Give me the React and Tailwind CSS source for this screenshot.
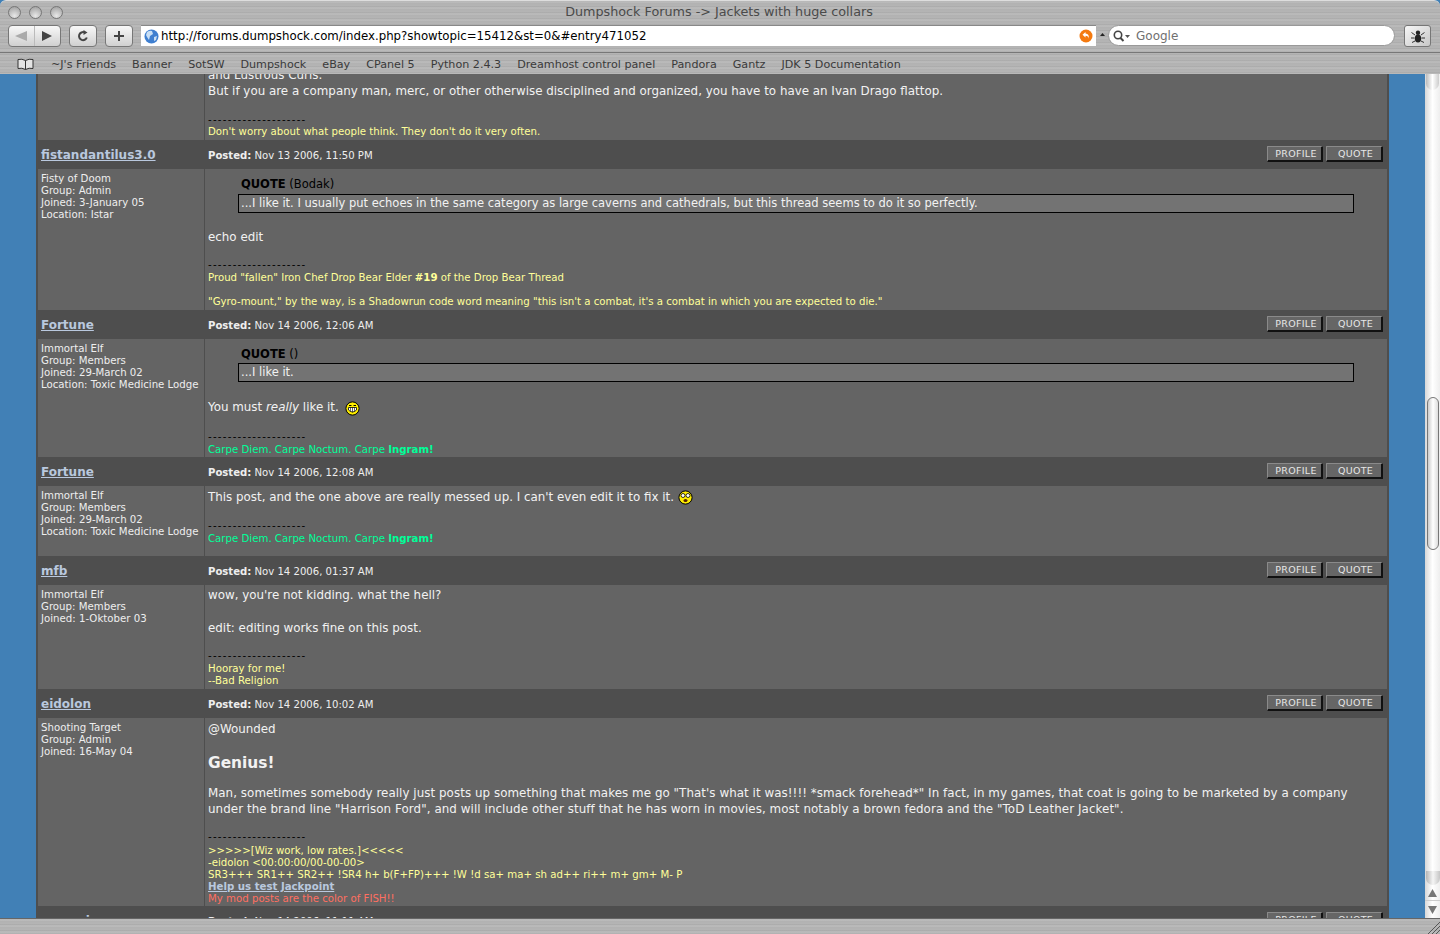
import React from "react";

const dash = "--------------------";

function Btn({ children, w }) {
  return (
    <div className={`${w} h-[16px] pl-[3px] tracking-[0.3px] flex items-center justify-center bg-[#666666] border border-[#8a8a8a] border-r-[#111111] border-b-[#111111] border-r-2 border-b-2 rounded-[1px] text-[9.5px] leading-none text-[#e6e6e6]`}>
      {children}
    </div>
  );
}

function Header({ name, date }) {
  return (
    <div className="h-[29px] flex items-center bg-[#4e4e4e]">
      <div className="w-[167px] pl-[3px] font-bold text-[12px] underline text-[#b9c8de] shrink-0">{name}</div>
      <div className="pl-[3px] pt-[3px] text-[10.1px] text-[#eeeeee] flex-1"><b>Posted:</b> {date}</div>
      <div className="flex gap-[3px] pr-[4px] -mt-[1px]">
        <Btn w="w-[56px]">PROFILE</Btn>
        <Btn w="w-[57px]">QUOTE</Btn>
      </div>
    </div>
  );
}

function Body({ info, h, children, pt }) {
  return (
    <div className={`flex ${h} bg-[#646464]`}>
      <div className="w-[167px] shrink-0 border-r border-[#4e4e4e] pl-[3px] pt-[4px] text-[10.2px] leading-[12px] text-[#eeeeee] whitespace-nowrap">
        {info.map((l) => <div key={l}>{l}</div>)}
      </div>
      <div className={`flex-1 pl-[3px] ${pt} text-[#f2f2f2]`}>{children}</div>
    </div>
  );
}

const T = ({ c = "", children }) => <div className={`text-[11.88px] leading-[16px] whitespace-nowrap ${c}`}>{children}</div>;
const S = ({ c = "", children }) => <div className={`text-[10.2px] leading-[12px] whitespace-nowrap ${c}`}>{children}</div>;

function Quote({ who, text, boxH }) {
  return (
    <div className="pl-[31px] pr-[33px]">
      <div className="pl-[2px] pt-[1px] text-[11.5px] leading-[16px] text-black"><b>QUOTE</b> ({who})</div>
      <div className={`-ml-[1px] ${boxH} flex items-center border border-black bg-[#737373] pl-[2px] pt-[1px] text-[11.5px] text-[#f2f2f2]`}>{text}</div>
    </div>
  );
}

function Grin() {
  return (
    <svg width="15" height="15" viewBox="0 0 15 15" className="inline-block align-[-5px] ml-[3px]">
      <circle cx="7.5" cy="7.5" r="6.6" fill="#ffee00" stroke="#000" />
      <path d="M3.5 6.5h8v2.5q-4 4-8 0z" fill="#fff" stroke="#000" strokeWidth="0.8" />
      <path d="M5.5 6.5v4M7.5 6.5v5M9.5 6.5v4" stroke="#000" strokeWidth="0.6" />
      <path d="M4 4.5h2.5M8.5 4.5h2.5" stroke="#000" />
    </svg>
  );
}

function Shock() {
  return (
    <svg width="15" height="15" viewBox="0 0 15 15" className="inline-block align-[-4px]">
      <circle cx="7.5" cy="7.5" r="6.6" fill="#ffee00" stroke="#000" />
      <circle cx="5" cy="5.5" r="2" fill="#fff" stroke="#000" strokeWidth="0.8" />
      <circle cx="10" cy="5.5" r="2" fill="#fff" stroke="#000" strokeWidth="0.8" />
      <ellipse cx="7.5" cy="10.5" rx="2" ry="1.5" fill="#552200" />
    </svg>
  );
}

const metal = "bg-[repeating-linear-gradient(180deg,#b4b4b4_0px,#bdbdbd_1px,#aeaeae_3px,#b8b8b8_4px,#a9a9a9_6px)]";

function Bug() {
  return (
    <svg width="16" height="14" viewBox="0 0 16 14">
      <ellipse cx="8" cy="9.5" rx="3.2" ry="4" fill="#222" />
      <circle cx="8" cy="3.8" r="2.2" fill="#222" />
      <path d="M5 6 1.5 3.5M11 6l3.5-2.5M4.5 9H1M11.5 9H15M5 12l-3 1.5M11 12l3 1.5" stroke="#333" strokeWidth="1" fill="none" />
    </svg>
  );
}

const bookmarks = ["~J's Friends", "Banner", "SotSW", "Dumpshock", "eBay", "CPanel 5", "Python 2.4.3", "Dreamhost control panel", "Pandora", "Gantz", "JDK 5 Documentation"];

function Chrome() {
  return (
    <div className={`h-[74px] shrink-0 ${metal} flex flex-col rounded-t-[6px] border-t border-[#dddddd] font-['DejaVu_Sans',sans-serif] relative z-10`}>
      <div className="h-[23px] shrink-0 flex items-center relative">
        <div className="flex gap-[8px] pl-[8px]">
          {[0, 1, 2].map((i) => (
            <div key={i} className="w-[13px] h-[13px] rounded-full border border-[#777777] bg-[radial-gradient(circle_at_50%_80%,#e8e8e8,#9a9a9a)]" />
          ))}
        </div>
        <div className="absolute inset-0 pb-[2px] pr-[2px] flex items-center justify-center text-[12.75px] text-[#4a4a4a]">Dumpshock Forums -&gt; Jackets with huge collars</div>
      </div>
      <div className="h-[29px] shrink-0 flex items-start pt-[1px] border-b border-[#777777]">
        <div className="ml-[8px] w-[53px] h-[22px] flex bg-gradient-to-b from-[#f8f8f8] to-[#d0d0d0] border border-[#777777] rounded-[4px]">
          <div className="w-1/2 flex items-center justify-center border-r border-[#bbbbbb]">
            <svg width="12" height="10" viewBox="0 0 12 10"><path d="M0 5 12 0v10z" fill="#aaaaaa" /></svg>
          </div>
          <div className="w-1/2 flex items-center justify-center">
            <svg width="10" height="10" viewBox="0 0 10 10"><path d="M10 5 0 0v10z" fill="#444444" /></svg>
          </div>
        </div>
        <div className="ml-[8px] w-[28px] h-[22px] flex items-center justify-center bg-gradient-to-b from-[#f8f8f8] to-[#d0d0d0] border border-[#777777] rounded-[4px]">
          <svg width="12" height="12" viewBox="0 0 12 12"><path d="M9.8 7.5A4 4 0 1 1 7.5 2.4" stroke="#444" strokeWidth="2" fill="none" /><path d="M6.5 0 10.5 2.6 6.5 5z" fill="#444" /></svg>
        </div>
        <div className="ml-[8px] w-[28px] h-[22px] flex items-center justify-center bg-gradient-to-b from-[#f8f8f8] to-[#d0d0d0] border border-[#777777] rounded-[4px]">
          <svg width="12" height="12" viewBox="0 0 12 12"><path d="M6 1v10M1 6h10" stroke="#444" strokeWidth="2" /></svg>
        </div>
        <div className="ml-[8px] w-[955px] h-[21px] flex items-center bg-white border-t border-[#888888] pl-[3px] pr-[3px] text-[11.77px] text-black">
          <svg width="15" height="15" viewBox="0 0 15 15" className="shrink-0 mr-[2px]">
            <circle cx="7.5" cy="7.5" r="7" fill="#3f7fd0" />
            <path d="M3 3q3-2 5-1l1 3-3 2-1 4-2-3-1-2zM10 8l3-1-1 4-2 1z" fill="#c9dff5" />
          </svg>
          <span className="flex-1 pt-[1px]">http://forums.dumpshock.com/index.php?showtopic=15412&amp;st=0&amp;#entry471052</span>
          <svg width="14" height="14" viewBox="0 0 14 14" className="shrink-0">
            <circle cx="7" cy="7" r="6.5" fill="#f47a10" />
            <path d="M6.5 3 3.5 5.8 6.5 8.5V6.7q3 0 3 3 1.2-5-3-5.2z" fill="#fff" />
          </svg>
        </div>
        <div className="w-[12px] h-[21px] flex items-center justify-center">
          <svg width="5" height="5" viewBox="0 0 5 5"><path d="M2.5 0 5 3H0z" fill="#222" /></svg>
        </div>
        <div className="w-[287px] h-[21px] flex items-center bg-white border border-[#999999] rounded-full pl-[4px] text-[12px] text-[#707070]">
          <svg width="18" height="12" viewBox="0 0 18 12" className="mr-[5px]">
            <circle cx="5" cy="5" r="3.7" stroke="#444" strokeWidth="1.6" fill="none" />
            <path d="M7.5 8 10.5 11" stroke="#444" strokeWidth="2" />
            <path d="M12 5h5l-2.5 3z" fill="#555" />
          </svg>
          Google
        </div>
        <div className="ml-[9px] w-[27px] h-[22px] flex items-center justify-center bg-gradient-to-br from-[#f6f6f6] to-[#c8c8c8] border border-[#777777] rounded-[3px]">
          <Bug />
        </div>
      </div>
      <div className="flex-1 flex items-center pt-[3px] text-[11.15px] font-medium text-[#3a3a3a] pl-[17px] gap-[16px]">
        <svg width="17" height="12" viewBox="0 0 17 12" className="mr-[1px] -mt-[3px]">
          <path d="M8.5 2.5Q5 .5 1 1.5v9q4-1 7.5 1 3.5-2 7.5-1v-9q-4-1-7.5 1zM8.5 2.5v9" stroke="#333" fill="#e4e4e4" />
        </svg>
        {bookmarks.map((b) => <span key={b}>{b}</span>)}
      </div>
    </div>
  );
}

function Scrollbar() {
  return (
    <div className="w-[15px] shrink-0 flex flex-col bg-gradient-to-r from-[#d8d8d8] via-[#ffffff] to-[#eeeeee]">
      <div className="flex-1 relative">
        <div className="h-[16px] rounded-b-full bg-gradient-to-r from-[#bbbbbb] via-[#ffffff] to-[#cccccc] mx-[1px]" />
        <div className="absolute left-[2px] top-[323px] w-[12px] h-[153px] rounded-full border border-[#777777] bg-gradient-to-r from-[#cccccc] via-[#ffffff] to-[#dddddd]" />
        <div className="absolute bottom-0 left-[1px] right-0 h-[14px] rounded-b-full bg-gradient-to-r from-[#b5b5b5] via-[#f5f5f5] to-[#c5c5c5]" />
      </div>
      <div className="h-[16px] flex items-center justify-center border-b border-[#cccccc]">
        <svg width="9" height="8" viewBox="0 0 9 8"><path d="M4.5 0 9 8H0z" fill="#777777" /></svg>
      </div>
      <div className="h-[17px] flex items-center justify-center">
        <svg width="9" height="8" viewBox="0 0 9 8"><path d="M4.5 8 9 0H0z" fill="#777777" /></svg>
      </div>
    </div>
  );
}

const Carpe = () => (
  <S c="text-[#00ff99] mt-[1px]">Carpe Diem. Carpe Noctum. Carpe <b>Ingram!</b></S>
);
const Dash = ({ c }) => <S c={`text-black tracking-[1.25px] ${c}`}>{dash}</S>;

export default function App() {
  const yellow = "text-[#ffff99]";
  return (
    <div className="h-[934px] w-[1440px] overflow-hidden flex flex-col bg-[#4180b6] font-['DejaVu_Sans',sans-serif]">
      <Chrome />
      <div className="flex flex-1 min-h-0">
        <div className="flex-1 overflow-hidden">
          <div className="ml-[36px] w-[1353px] border-x-2 border-[#4e4e4e]">
            <div className="h-[66px] overflow-hidden flex bg-[#646464]">
              <div className="w-[167px] shrink-0 border-r border-[#4e4e4e]" />
              <div className="pl-[3px] -mt-[7px] text-[#f2f2f2]">
                <T>and Lustrous Curls.</T>
                <T>But if you are a company man, merc, or other otherwise disciplined and organized, you have to have an Ivan Drago flattop.</T>
                <Dash c="mt-[15px]" />
                <S c={yellow}>Don't worry about what people think. They don't do it very often.</S>
              </div>
            </div>

            <Header name="fistandantilus3.0" date="Nov 13 2006, 11:50 PM" />
            <Body h="h-[141px]" pt="pt-[6px]" info={["Fisty of Doom", "Group: Admin", "Joined: 3-January 05", "Location: Istar"]}>
              <Quote who="Bodak" boxH="mt-[2px] h-[19px]" text="...I like it. I usually put echoes in the same category as large caverns and cathedrals, but this thread seems to do it so perfectly." />
              <T c="mt-[16px]">echo edit</T>
              <Dash c="mt-[14px]" />
              <S c={`${yellow} mt-[1px]`}>Proud "fallen" Iron Chef Drop Bear Elder <b>#19</b> of the Drop Bear Thread</S>
              <S c={`${yellow} mt-[12px]`}>"Gyro-mount," by the way, is a Shadowrun code word meaning "this isn't a combat, it's a combat in which you are expected to die."</S>
            </Body>

            <Header name="Fortune" date="Nov 14 2006, 12:06 AM" />
            <Body h="h-[118px]" pt="pt-[6px]" info={["Immortal Elf", "Group: Members", "Joined: 29-March 02", "Location: Toxic Medicine Lodge"]}>
              <Quote who="" boxH="mt-[1px] h-[19px]" text="...I like it." />
              <T c="mt-[17px]">You must <i>really</i> like it. <Grin /></T>
              <Dash c="mt-[15px]" />
              <Carpe />
            </Body>

            <Header name="Fortune" date="Nov 14 2006, 12:08 AM" />
            <Body h="h-[70px]" pt="pt-[3px]" info={["Immortal Elf", "Group: Members", "Joined: 29-March 02", "Location: Toxic Medicine Lodge"]}>
              <T>This post, and the one above are really messed up. I can't even edit it to fix it. <Shock /></T>
              <Dash c="mt-[15px]" />
              <Carpe />
            </Body>

            <Header name="mfb" date="Nov 14 2006, 01:37 AM" />
            <Body h="h-[104px]" pt="pt-[2px]" info={["Immortal Elf", "Group: Members", "Joined: 1-Oktober 03"]}>
              <T>wow, you're not kidding. what the hell?</T>
              <T c="mt-[17px]">edit: editing works fine on this post.</T>
              <Dash c="mt-[14px]" />
              <S c={`${yellow} mt-[1px]`}>Hooray for me!</S>
              <S c={yellow}>--Bad Religion</S>
            </Body>

            <Header name="eidolon" date="Nov 14 2006, 10:02 AM" />
            <Body h="h-[188px]" pt="pt-[3px]" info={["Shooting Target", "Group: Admin", "Joined: 16-May 04"]}>
              <T>@Wounded</T>
              <div className="mt-[16px] h-[20px] text-[15.4px] leading-[20px] font-bold">Genius!</div>
              <T c="mt-[12px] tracking-[0.05px]">Man, sometimes somebody really just posts up something that makes me go "That's what it was!!!! *smack forehead*" In fact, in my games, that coat is going to be marketed by a company</T>
              <T c="tracking-[0.07px]">under the brand line "Harrison Ford", and will include other stuff that he has worn in movies, most notably a brown fedora and the "ToD Leather Jacket".</T>
              <Dash c="mt-[14px]" />
              <S c={`${yellow} mt-[2px]`}>&gt;&gt;&gt;&gt;&gt;[Wiz work, low rates.]&lt;&lt;&lt;&lt;&lt;</S>
              <S c={yellow}>-eidolon &lt;00:00:00/00-00-00&gt;</S>
              <S c={yellow}>SR3+++ SR1++ SR2++ !SR4 h+ b(F+FP)+++ !W !d sa+ ma+ sh ad++ ri++ m+ gm+ M- P</S>
              <S c="text-[#b9c8de] font-bold underline">Help us test Jackpoint</S>
              <S c="text-[#ff6f61]">My mod posts are the color of FISH!!</S>
            </Body>

            <Header name="nezumi" date="Nov 14 2006, 11:11 AM" />
          </div>
        </div>
        <Scrollbar />
      </div>
      <div className={`h-[16px] shrink-0 ${metal} border-t border-[#666666] relative z-10 flex justify-end items-end`}>
        <svg width="13" height="13" viewBox="0 0 13 13">
          <path d="M1 13 13 1M5 13l8-8M9 13l4-4" stroke="#555555" />
        </svg>
      </div>
    </div>
  );
}
